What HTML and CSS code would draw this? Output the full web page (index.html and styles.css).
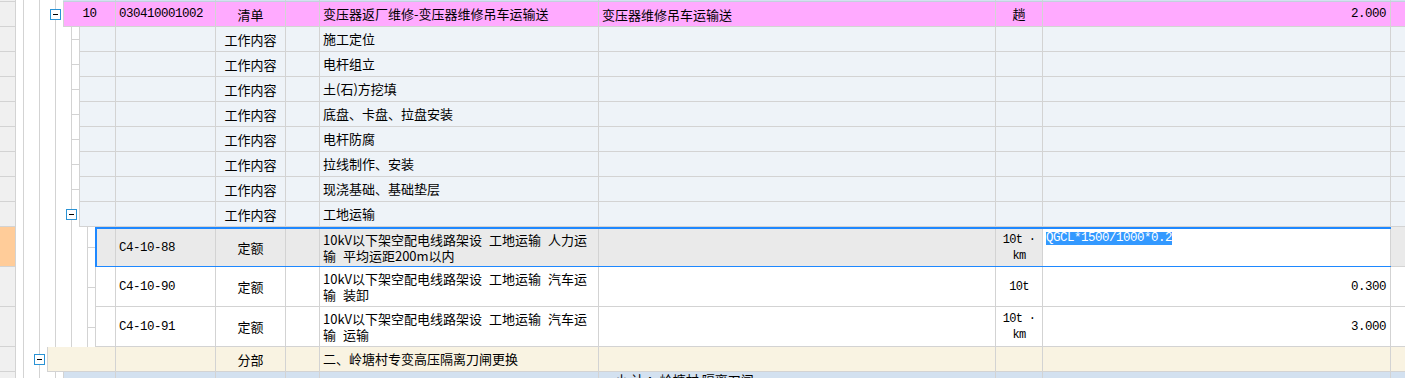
FILE: index.html
```html
<!DOCTYPE html>
<html lang="zh-CN">
<head>
<meta charset="utf-8">
<title>清单</title>
<link rel="stylesheet" href="styles.css">
</head>
<body>
<div class="sheet">
  <div class="row h2">
    <div class="gut"></div>
    <div class="tree t47"></div>
    <div class="grp sum noleft">
      <div class="c ca"></div><div class="c cc"></div><div class="c ct"></div><div class="c cb"></div><div class="c cn"></div><div class="c cd"></div><div class="c cu"></div><div class="c cm"></div><div class="c cl"></div>
    </div>
  </div>

  <div class="row h25">
    <div class="gut"></div>
    <div class="tree t47"><span class="minus"></span></div>
    <div class="grp pink">
      <div class="c ca mono">10</div><div class="c cc mono">030410001002</div><div class="c ct">清单</div><div class="c cb"></div><div class="c cn">变压器返厂维修-变压器维修吊车运输送</div><div class="c cd">变压器维修吊车运输送</div><div class="c cu">趟</div><div class="c cm mono">2.000</div><div class="c cl"></div>
    </div>
  </div>

  <div class="row h25">
    <div class="gut"></div>
    <div class="tree t63"><span class="stub"></span></div>
    <div class="grp work">
      <div class="c ca"></div><div class="c cc"></div><div class="c ct">工作内容</div><div class="c cb"></div><div class="c cn">施工定位</div><div class="c cd"></div><div class="c cu"></div><div class="c cm"></div><div class="c cl"></div>
    </div>
  </div>
  <div class="row h25">
    <div class="gut"></div>
    <div class="tree t63"><span class="stub"></span></div>
    <div class="grp work">
      <div class="c ca"></div><div class="c cc"></div><div class="c ct">工作内容</div><div class="c cb"></div><div class="c cn">电杆组立</div><div class="c cd"></div><div class="c cu"></div><div class="c cm"></div><div class="c cl"></div>
    </div>
  </div>
  <div class="row h25">
    <div class="gut"></div>
    <div class="tree t63"><span class="stub"></span></div>
    <div class="grp work">
      <div class="c ca"></div><div class="c cc"></div><div class="c ct">工作内容</div><div class="c cb"></div><div class="c cn">土(石)方挖填</div><div class="c cd"></div><div class="c cu"></div><div class="c cm"></div><div class="c cl"></div>
    </div>
  </div>
  <div class="row h25">
    <div class="gut"></div>
    <div class="tree t63"><span class="stub"></span></div>
    <div class="grp work">
      <div class="c ca"></div><div class="c cc"></div><div class="c ct">工作内容</div><div class="c cb"></div><div class="c cn">底盘、卡盘、拉盘安装</div><div class="c cd"></div><div class="c cu"></div><div class="c cm"></div><div class="c cl"></div>
    </div>
  </div>
  <div class="row h25">
    <div class="gut"></div>
    <div class="tree t63"><span class="stub"></span></div>
    <div class="grp work">
      <div class="c ca"></div><div class="c cc"></div><div class="c ct">工作内容</div><div class="c cb"></div><div class="c cn">电杆防腐</div><div class="c cd"></div><div class="c cu"></div><div class="c cm"></div><div class="c cl"></div>
    </div>
  </div>
  <div class="row h25">
    <div class="gut"></div>
    <div class="tree t63"><span class="stub"></span></div>
    <div class="grp work">
      <div class="c ca"></div><div class="c cc"></div><div class="c ct">工作内容</div><div class="c cb"></div><div class="c cn">拉线制作、安装</div><div class="c cd"></div><div class="c cu"></div><div class="c cm"></div><div class="c cl"></div>
    </div>
  </div>
  <div class="row h25">
    <div class="gut"></div>
    <div class="tree t63"><span class="stub"></span></div>
    <div class="grp work">
      <div class="c ca"></div><div class="c cc"></div><div class="c ct">工作内容</div><div class="c cb"></div><div class="c cn">现浇基础、基础垫层</div><div class="c cd"></div><div class="c cu"></div><div class="c cm"></div><div class="c cl"></div>
    </div>
  </div>
  <div class="row h25">
    <div class="gut"></div>
    <div class="tree t63"><span class="minus"></span></div>
    <div class="grp work">
      <div class="c ca"></div><div class="c cc"></div><div class="c ct">工作内容</div><div class="c cb"></div><div class="c cn">工地运输</div><div class="c cd"></div><div class="c cu"></div><div class="c cm"></div><div class="c cl"></div>
    </div>
  </div>

  <div class="row h40">
    <div class="gut cur"></div>
    <div class="tree t79"><span class="stub"></span></div>
    <div class="selgrp">
      <div class="sel">
        <div class="c ca"></div><div class="c cc mono">C4-10-88</div><div class="c ct">定额</div><div class="c cb"></div><div class="c cn"><span>10kV以下架空配电线路架设 工地运输 人力运<br>输 平均运距200m以内</span></div><div class="c cd"></div><div class="c cu unit"><span>10t&nbsp;·<br>km</span></div><div class="c cm edit"><span class="hl mono">QGCL*1500/1000*0.2</span></div>
      </div>
      <div class="c cl"></div>
    </div>
  </div>

  <div class="row h40">
    <div class="gut"></div>
    <div class="tree t79"><span class="stub"></span></div>
    <div class="grp plain">
      <div class="c ca"></div><div class="c cc mono">C4-10-90</div><div class="c ct">定额</div><div class="c cb"></div><div class="c cn"><span>10kV以下架空配电线路架设 工地运输 汽车运<br>输 装卸</span></div><div class="c cd"></div><div class="c cu unit">10t</div><div class="c cm mono">0.300</div><div class="c cl"></div>
    </div>
  </div>
  <div class="row h40">
    <div class="gut"></div>
    <div class="tree t79"><span class="stub"></span></div>
    <div class="grp plain">
      <div class="c ca"></div><div class="c cc mono">C4-10-91</div><div class="c ct">定额</div><div class="c cb"></div><div class="c cn"><span>10kV以下架空配电线路架设 工地运输 汽车运<br>输 运输</span></div><div class="c cd"></div><div class="c cu unit"><span>10t&nbsp;·<br>km</span></div><div class="c cm mono">3.000</div><div class="c cl"></div>
    </div>
  </div>

  <div class="row h25">
    <div class="gut"></div>
    <div class="tree t31"><span class="minus"></span></div>
    <div class="grp fb">
      <div class="c ca"></div><div class="c cc"></div><div class="c ct">分部</div><div class="c cb"></div><div class="c cn">二、岭塘村专变高压隔离刀闸更换</div><div class="c cd"></div><div class="c cu"></div><div class="c cm"></div><div class="c cl"></div>
    </div>
  </div>

  <div class="row fill">
    <div class="gut"></div>
    <div class="tree t47"></div>
    <div class="grp sum">
      <div class="c ca"></div><div class="c cc"></div><div class="c ct"></div><div class="c cb"></div><div class="c cn"></div><div class="c cd total">小 计 ：岭塘村 隔离刀闸</div><div class="c cu"></div><div class="c cm"></div><div class="c cl"></div>
    </div>
  </div>
</div>
</body>
</html>
```
FILE: styles.css
```css
html, body {
  margin: 0;
  padding: 0;
  background: #fff;
  overflow: hidden;
}

body {
  font-family: "Noto Sans CJK SC", "Noto Sans", sans-serif;
  font-size: 13px;
  color: #000;
}

.sheet {
  width: 1405px;
  height: 378px;
  display: flex;
  flex-direction: column;
  overflow: hidden;
}

.row {
  display: flex;
  flex: none;
}

.h2 { height: 2px; }
.h25 { height: 25px; }
.h40 { height: 40px; }
.row.fill { flex: 1; }

.gut {
  width: 16px;
  flex: none;
  box-sizing: border-box;
  background: #f0f0f0;
  border-right: 1px solid #d3d3d3;
  border-bottom: 1px solid #d3d3d3;
}

.gut.cur { background: #ffcc99; }

.tree {
  flex: none;
  display: flex;
  justify-content: flex-end;
  align-items: center;
  background-image: linear-gradient(to right, transparent 7px, #d3d3d3 7px, #d3d3d3 8px, transparent 8px);
  background-size: 16px 100%;
  background-repeat: repeat-x;
}

.t31 { width: 31px; }
.t47 { width: 47px; }
.t63 { width: 63px; }
.t79 { width: 79px; }

.minus {
  width: 11px;
  height: 11px;
  box-sizing: border-box;
  margin-right: 2px;
  border: 1px solid #2a93d5;
  background: #fff;
  display: flex;
  align-items: center;
  justify-content: center;
}

.minus::before {
  content: "";
  width: 5px;
  height: 1px;
  background: #000;
}

.stub {
  width: 8px;
  height: 1px;
  background: #d3d3d3;
}

.grp {
  flex: 1;
  min-width: 0;
  display: flex;
  box-sizing: border-box;
  border-left: 1px solid #d3d3d3;
  border-bottom: 1px solid #d3d3d3;
}

.grp.noleft { border-left: none; border-bottom-color: #c3d0de; }

.pink { background: #ffaaff; }
.work { background: #eef3f8; }
.plain { background: #fff; }
.fb { background: #f9f3e2; }
.sum { background: #d3e1f0; }

.c {
  flex: none;
  box-sizing: border-box;
  border-right: 1px solid #d3d3d3;
  display: flex;
  align-items: center;
  padding: 0 3px;
  white-space: nowrap;
  overflow: hidden;
}

.ca { flex: 1 1 0; min-width: 0; justify-content: center; padding: 0; }
.cc { width: 100px; }
.ct { width: 70px; justify-content: center; padding: 0; }
.cb { width: 34px; }
.cn { width: 279px; line-height: 16px; word-spacing: 4px; }
.cd { width: 397px; }
.cu { width: 47px; justify-content: center; text-align: center; padding: 0; line-height: 16px; }
.cm { width: 348px; justify-content: flex-end; padding-right: 4px; }
.cl { width: 14px; border-right: none; }

.mono {
  font-family: "Liberation Mono", "DejaVu Sans Mono", monospace;
  font-size: 12.5px;
  letter-spacing: -0.5px;
}

.unit {
  font-family: "Liberation Mono", "DejaVu Sans Mono", monospace;
  font-size: 12px;
  letter-spacing: -0.7px;
}

.selgrp {
  flex: 1;
  min-width: 0;
  display: flex;
}

.sel {
  flex: 1;
  min-width: 0;
  display: flex;
  box-sizing: border-box;
  border: 2px solid #1e88ff;
  border-right: none;
  border-bottom-width: 1px;
  background: #eaeaea;
}

.selgrp > .cl {
  background: #eaeaea;
  border-bottom: 1px solid #d3d3d3;
}

.edit {
  background: #fff;
  align-items: flex-start;
  justify-content: flex-start;
  padding: 3px 3px 0;
}

.hl {
  display: inline-block;
  background: #3399ff;
  color: #fff;
  line-height: 13px;
}

.total {
  align-items: flex-start;
  padding-left: 16px;
  line-height: 16px;
}
```
